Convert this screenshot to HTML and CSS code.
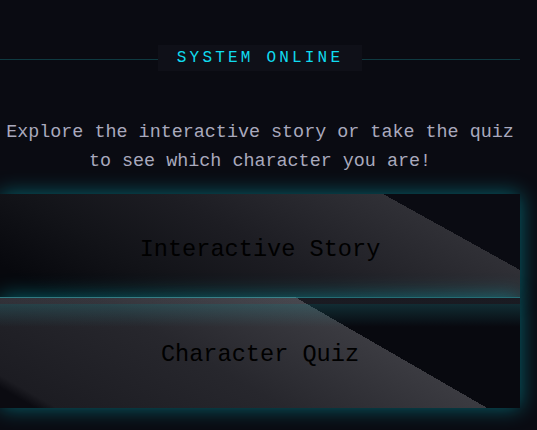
FILE: index.html
```html
<!DOCTYPE html>
<html lang="en">
<head>
<meta charset="utf-8">
<title>System Online</title>
<link rel="stylesheet" href="styles.css">
</head>
<body>
<main class="page">
  <div class="status">
    <span class="status-line"></span>
    <span class="status-badge">SYSTEM ONLINE</span>
    <span class="status-line"></span>
  </div>
  <p class="intro">Explore the interactive story or take the quiz to see which character you are!</p>
  <div class="actions">
    <button class="choice choice--story" type="button">Interactive Story</button>
    <button class="choice choice--quiz" type="button">Character Quiz</button>
  </div>
</main>
</body>
</html>
```

FILE: styles.css
```css
html, body {
  margin: 0;
  height: 100%;
}

body {
  background: #0a0b12;
  overflow: hidden;
  font-family: "Liberation Mono", "Courier New", monospace;
}

.page {
  width: 520px;
  padding-top: 45px;
}

.status {
  display: flex;
  align-items: center;
}

.status-line {
  flex: 1;
  height: 1px;
  margin-top: 2px;
  background: #0f3a41;
}

.status-badge {
  padding: 4px 19.2px;
  font-size: 16px;
  line-height: 18px;
  letter-spacing: 0.2em;
  color: #10dcf0;
  background: #0f1018;
}

.intro {
  margin: 47px 0 0;
  font-size: 18.4px;
  line-height: 29.44px;
  text-align: center;
  color: #a9a9bd;
}

.actions {
  display: flex;
  flex-direction: column;
  margin-top: 17px;
}

.choice {
  display: block;
  width: 100%;
  margin: 0;
  border: 0;
  padding: 0;
  font-family: inherit;
  font-size: 23.6px;
  line-height: normal;
  color: #000;
  text-align: center;
  box-shadow: 0 0 20px rgba(0, 210, 225, 0.45);
}

.choice--story {
  height: 103px;
  padding-top: 8px;
  background: linear-gradient(29deg, #07080d 8%, #121318 28%, #1d1d23 50%, #303036 80.6%, #0a0b12 80.6%);
}

.choice--quiz {
  height: 111px;
  padding-top: 4px;
  background:
    linear-gradient(to bottom,
      rgba(60, 190, 200, 0.55) 0 1px,
      rgba(170, 170, 185, 0.11) 1px 7px,
      rgba(50, 170, 180, 0.22) 7px,
      rgba(50, 170, 180, 0) 30px),
    linear-gradient(30deg, #0b0b11 5%, #1c1c22 8%, #27272d 40%, #3b3b41 68.4%, #08090f 68.4%);
}
```
